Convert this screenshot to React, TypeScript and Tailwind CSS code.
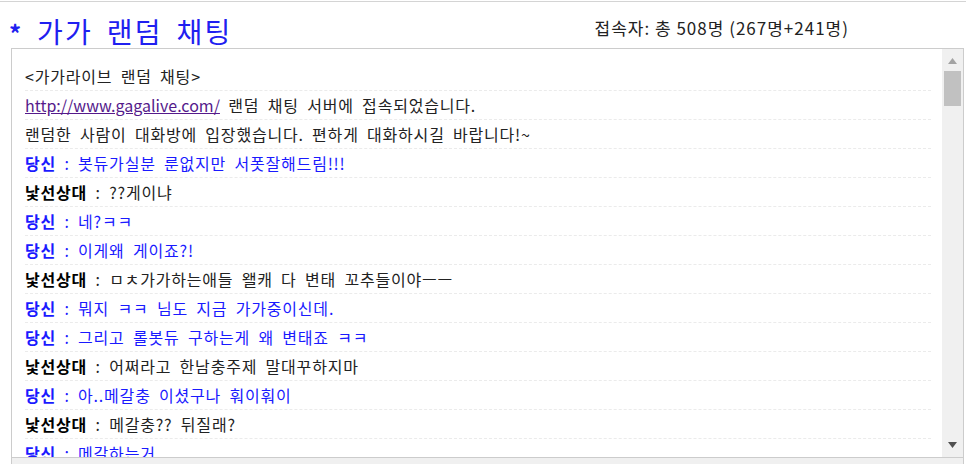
import React from "react"

type Line =
  | { kind: "plain"; text: string }
  | { kind: "link"; href: string; text: string }
  | { kind: "me"; text: string }
  | { kind: "them"; text: string }

const lines: Line[] = [
  { kind: "plain", text: "<가가라이브 랜덤 채팅>" },
  { kind: "link", href: "http://www.gagalive.com/", text: " 랜덤 채팅 서버에 접속되었습니다." },
  { kind: "plain", text: "랜덤한 사람이 대화방에 입장했습니다. 편하게 대화하시길 바랍니다!~" },
  { kind: "me", text: "봇듀가실분 룬없지만 서폿잘해드림!!!" },
  { kind: "them", text: "??게이냐" },
  { kind: "me", text: "네?ㅋㅋ" },
  { kind: "me", text: "이게왜 게이죠?!" },
  { kind: "them", text: "ㅁㅊ가가하는애들 왤캐 다 변태 꼬추들이야ㅡㅡ" },
  { kind: "me", text: "뭐지 ㅋㅋ 님도 지금 가가중이신데." },
  { kind: "me", text: "그리고 롤봇듀 구하는게 왜 변태죠 ㅋㅋ" },
  { kind: "them", text: "어쩌라고 한남충주제 말대꾸하지마" },
  { kind: "me", text: "아..메갈충 이셨구나 훠이훠이" },
  { kind: "them", text: "메갈충?? 뒤질래?" },
  { kind: "me", text: "메갈하는거" },
]

function ChatLine({ line }: { line: Line }) {
  if (line.kind === "plain") {
    return <span className="text-[#222]">{line.text}</span>
  }
  if (line.kind === "link") {
    return (
      <span className="text-[#222]">
        <a href={line.href} className="text-[#551a8b] underline tracking-[0px]">
          {line.href}
        </a>
        {line.text}
      </span>
    )
  }
  if (line.kind === "me") {
    return (
      <span className="text-[#1a1aff]">
        <b className="font-bold">당신</b> : {line.text}
      </span>
    )
  }
  return (
    <span className="text-[#222]">
      <b className="font-bold text-black">낯선상대</b> : {line.text}
    </span>
  )
}

export default function App() {
  return (
    <div className="w-[966px] h-[464px] overflow-hidden bg-white font-['Noto_Sans_CJK_KR',sans-serif]">
      <div className="h-px bg-white" />
      <div className="h-px bg-[#d4d4d4]" />

      {/* header */}
      <div className="h-[46px] flex items-start justify-between pl-[9px] pr-[117px]">
        <h1 className="mt-[12px] text-[28px] leading-[34px] tracking-[2.3px] text-[#2020f0] [word-spacing:5px]">
          <span className="font-bold text-[24px]">*</span> 가가 랜덤 채팅
        </h1>
        <div className="mt-[14px] text-[17px] leading-[24px] tracking-[1px] text-[#222]">접속자: 총 508명 (267명+241명)</div>
      </div>

      {/* chat box */}
      <div className="ml-[11px] w-[953px] h-[410px] border border-[#cccccc] flex">
        <div className="flex-1 overflow-hidden pt-[13px] pl-[13px] pr-[11px] text-[16px] tracking-[0.8px] [word-spacing:4px]">
          {lines.map((line, i) => (
            <div key={i} className="h-[29px] flex items-center border-b border-dashed border-[#ebebeb] whitespace-nowrap">
              <ChatLine line={line} />
            </div>
          ))}
        </div>
        <div className="w-[21px] bg-[#f0f0f0] flex flex-col items-center">
          <svg width="9" height="6" viewBox="0 0 9 6" className="mt-[9px]">
            <polygon points="4.5,0 9,6 0,6" fill="#a3a3a3" />
          </svg>
          <div className="mt-[7px] w-[17px] h-[35px] bg-[#c1c1c1]" />
          <div className="flex-1" />
          <svg width="9" height="6" viewBox="0 0 9 6" className="mb-[9px]">
            <polygon points="0,0 9,0 4.5,6" fill="#505050" />
          </svg>
        </div>
      </div>
      <div className="ml-[11px] w-[953px] h-[10px] bg-[#f0f0f0] border-x border-[#cccccc]" />
    </div>
  )
}
